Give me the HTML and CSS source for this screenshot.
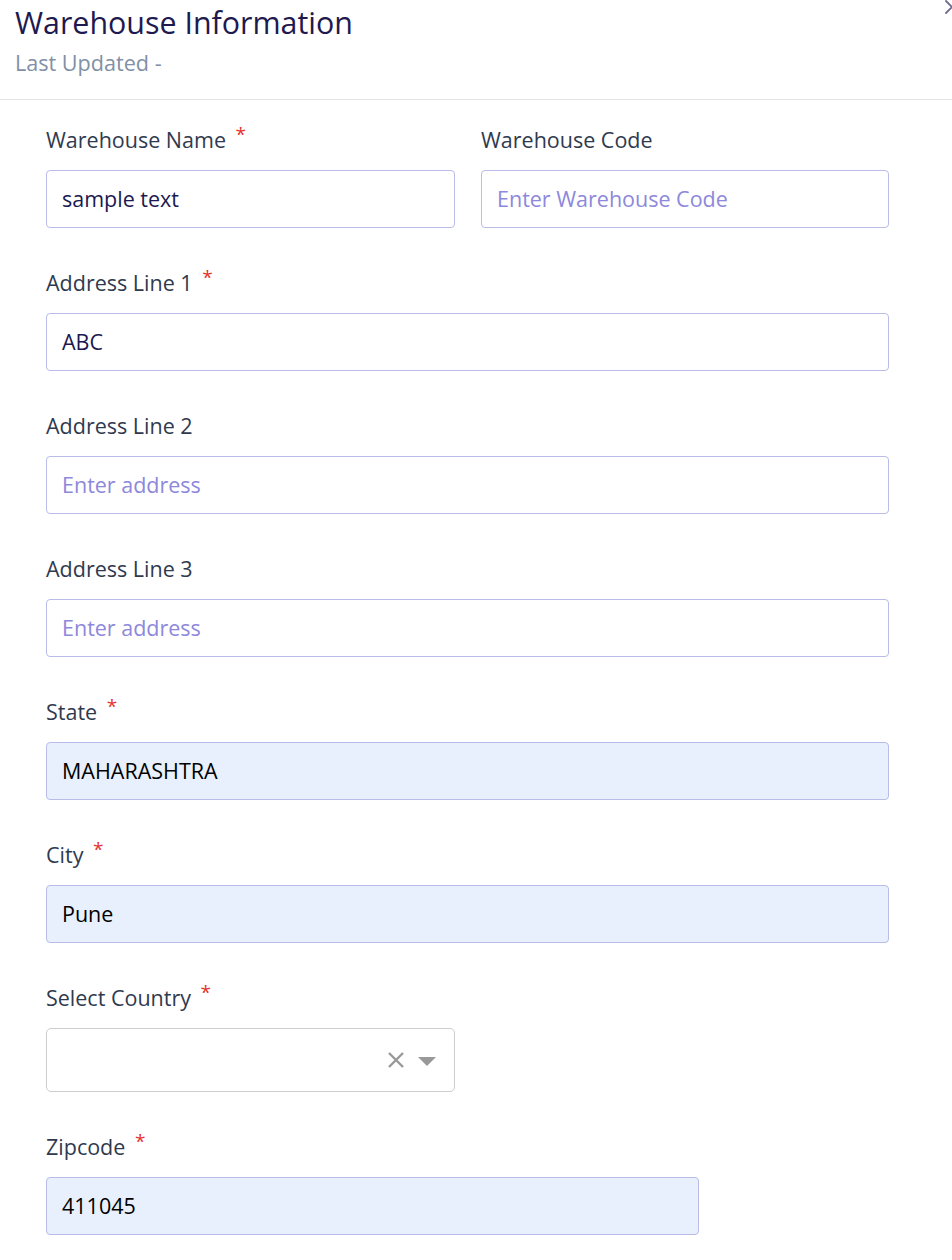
FILE: index.html
```html
<!DOCTYPE html>
<html>
<head>
<meta charset="utf-8">
<link rel="stylesheet" href="styles.css">
</head>
<body>
<div class="panel">
  <header class="head">
    <h1 class="title">Warehouse Information</h1>
    <div class="sub">Last Updated -</div>
    <svg class="close" viewBox="0 0 16 16" width="16" height="16"><path d="M2 2L14 14M14 2L2 14" stroke="#6f6b92" stroke-width="1.8" fill="none" stroke-linecap="round"/></svg>
  </header>
  <form class="form">
    <div class="row two">
      <div class="field">
        <label class="lbl">Warehouse Name <span class="req">*</span></label>
        <div class="inp val">sample text</div>
      </div>
      <div class="field">
        <label class="lbl">Warehouse Code</label>
        <div class="inp ph">Enter Warehouse Code</div>
      </div>
    </div>
    <div class="field">
      <label class="lbl">Address Line 1 <span class="req">*</span></label>
      <div class="inp val">ABC</div>
    </div>
    <div class="field">
      <label class="lbl">Address Line 2</label>
      <div class="inp ph">Enter address</div>
    </div>
    <div class="field">
      <label class="lbl">Address Line 3</label>
      <div class="inp ph">Enter address</div>
    </div>
    <div class="field">
      <label class="lbl">State <span class="req">*</span></label>
      <div class="inp auto">MAHARASHTRA</div>
    </div>
    <div class="field">
      <label class="lbl">City <span class="req">*</span></label>
      <div class="inp auto">Pune</div>
    </div>
    <div class="field half">
      <label class="lbl">Select Country <span class="req">*</span></label>
      <div class="select">
        <span class="sel-val"></span>
        <svg class="sel-x" viewBox="0 0 16 16" width="16" height="16"><path d="M1 1L15 15M15 1L1 15" stroke="#999" stroke-width="2.4" fill="none"/></svg>
        <svg class="sel-arrow" viewBox="0 0 18 9" width="18" height="9"><path d="M0 0H18L9 9Z" fill="#999"/></svg>
      </div>
    </div>
    <div class="field zip">
      <label class="lbl">Zipcode <span class="req">*</span></label>
      <div class="inp auto">411045</div>
    </div>
  </form>
</div>
</body>
</html>
```
FILE: styles.css
```css
* { box-sizing: border-box; }
html, body { margin: 0; padding: 0; background: #fff; }
body { font-family: "Open Sans", "Noto Sans", sans-serif; width: 952px; height: 1260px; overflow: hidden; }
.panel { width: 952px; }
.head { position: relative; padding: 5px 15px 0; height: 100px; border-bottom: 1px solid #e3e3e8; }
.title { margin: 0; font-size: 30.4px; line-height: 36px; font-weight: 400; color: #1e1a4f; }
.sub { font-size: 21.6px; line-height: 28px; margin-top: 8px; color: #8190a6; }
.close { position: absolute; right: -8px; top: -1px; }
.form { padding: 26px 63px 0 46px; display: flex; flex-direction: column; gap: 41px; }
.row.two { display: grid; grid-template-columns: 409px 408px; column-gap: 26px; }
.field { display: flex; flex-direction: column; gap: 16px; }
.lbl { display: block; height: 28px; font-size: 21.5px; line-height: 28px; color: #2f3a4f; white-space: nowrap; }
.req { color: #e5322d; font-size: 19px; line-height: 0; position: relative; top: -7px; margin-left: 4px; }
.inp { height: 58px; border: 1px solid #b9bbe8; border-radius: 4px; padding: 0 15px; font-size: 21.5px; line-height: 56px; white-space: nowrap; }
.inp.val { color: #1c1850; }
.inp.ph { color: #8d88db; }
.inp.auto { background: #e8f0fe; color: #000; }
.half { width: 409px; }
.zip { width: 653px; }
.select { height: 64px; border: 1px solid #cdcdcd; border-radius: 5px; display: flex; align-items: center; padding: 0 18px 0 15px; }
.sel-val { flex: 1; }
.sel-x { margin-right: 14px; }
.sel-arrow { margin-top: 2px; }
```
